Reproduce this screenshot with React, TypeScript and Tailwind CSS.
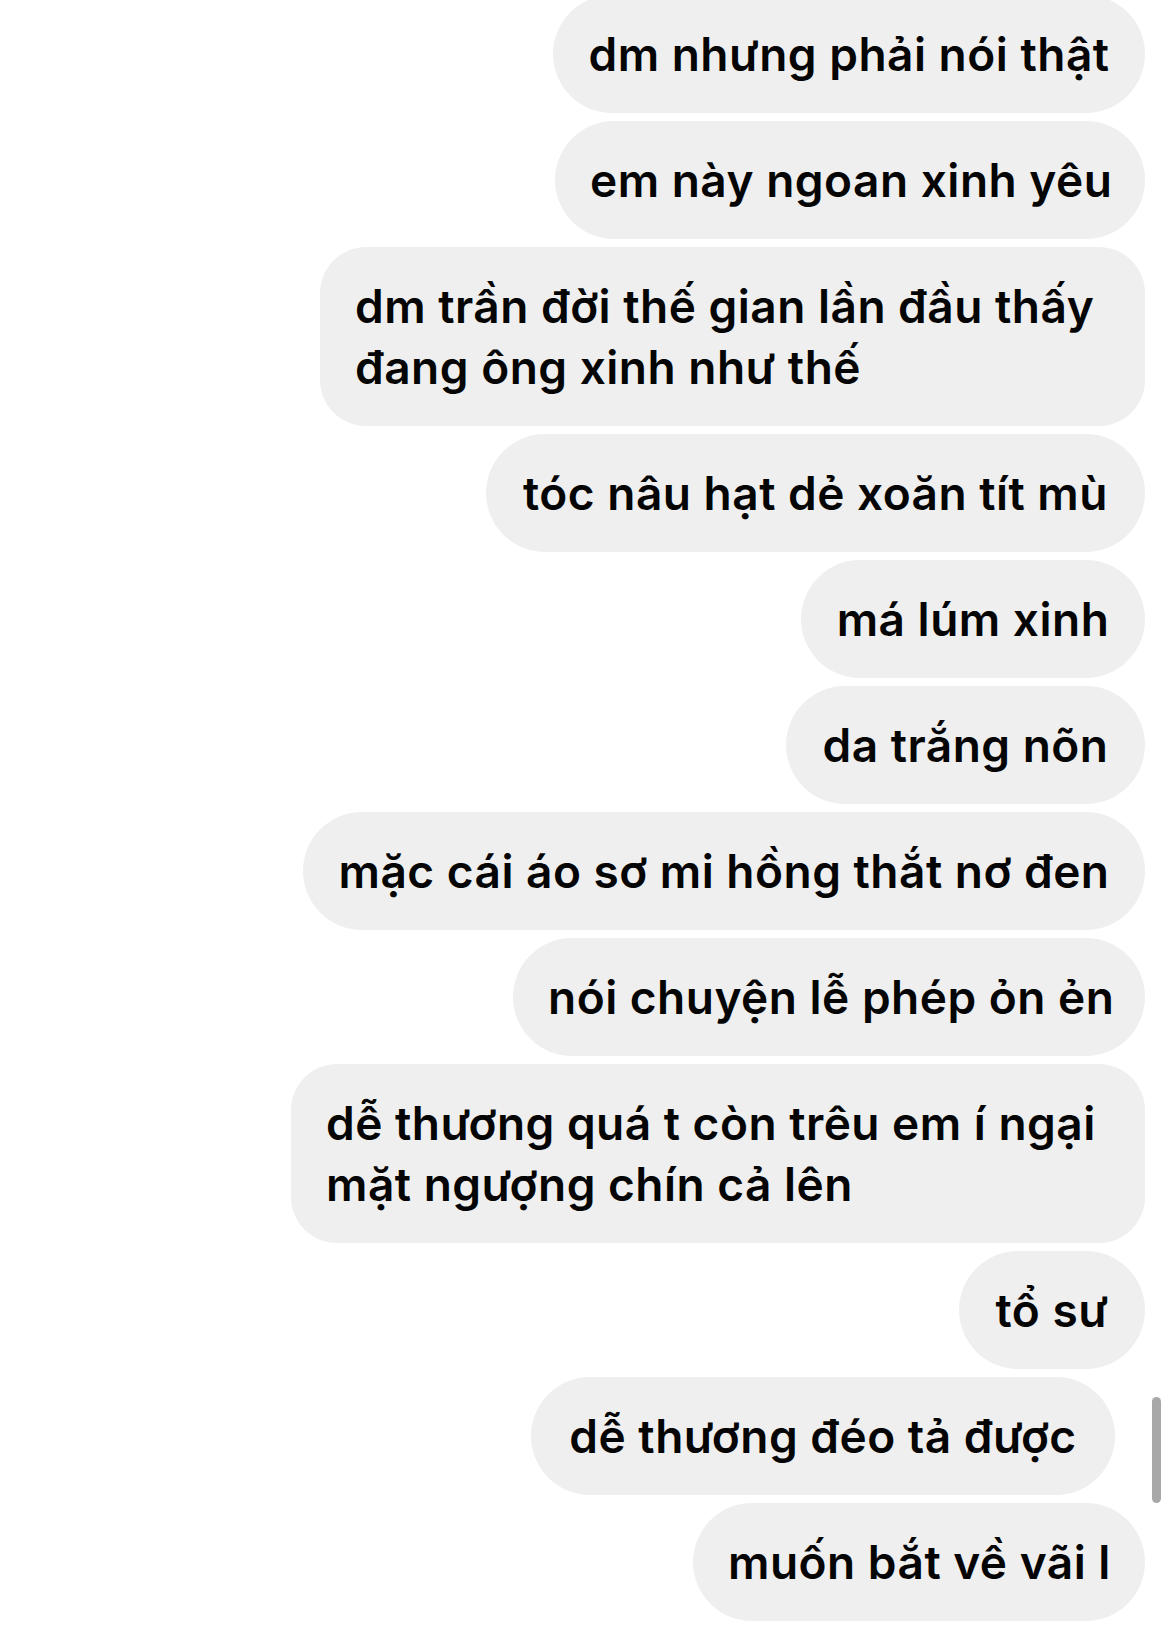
import React from "react";

type Msg = { lines: string[]; w: string; extra?: string };

const msgs: Msg[] = [
  { lines: ["dm nhưng phải nói thật"], w: "w-[592px] -mt-[5px]" },
  { lines: ["em này ngoan xinh yêu"], w: "w-[590px]" },
  { lines: ["dm trần đời thế gian lần đầu thấy", "đang ông xinh như thế"], w: "w-[825px]" },
  { lines: ["tóc nâu hạt dẻ xoăn tít mù"], w: "w-[659px]" },
  { lines: ["má lúm xinh"], w: "w-[344px]" },
  { lines: ["da trắng nõn"], w: "w-[359px]" },
  { lines: ["mặc cái áo sơ mi hồng thắt nơ đen"], w: "w-[842px]" },
  { lines: ["nói chuyện lễ phép ỏn ẻn"], w: "w-[632px]" },
  { lines: ["dễ thương quá t còn trêu em í ngại", "mặt ngượng chín cả lên"], w: "w-[854px]" },
  { lines: ["tổ sư"], w: "w-[186px]" },
  { lines: ["dễ thương đéo tả được"], w: "w-[584px] mr-[30px]" },
  { lines: ["muốn bắt về vãi l"], w: "w-[452px]" },
];

export default function App() {
  return (
    <div
      className="relative w-[1170px] h-[1646px] overflow-hidden bg-white"
      style={{ fontFamily: "Inter, 'Noto Sans', sans-serif" }}
    >
      <div className="flex flex-col items-end gap-[8px] pr-[25px]">
        {msgs.map((m, i) => {
          const multi = m.lines.length > 1;
          return (
            <div
              key={i}
              className={`${m.w} ${
                multi ? "rounded-[46px] text-left" : "rounded-full text-center"
              } bg-[#efefef] px-[35px] py-[28.5px] text-[46px] leading-[61px] font-semibold text-[#050505] whitespace-nowrap tracking-[0.5px]`}
            >
              {m.lines.map((l, j) => (
                <div key={j}>{l}</div>
              ))}
            </div>
          );
        })}
      </div>
      <div className="absolute left-[1152px] top-[1397px] w-[9px] h-[106px] rounded-full bg-[#a8a8a8]" />
    </div>
  );
}
